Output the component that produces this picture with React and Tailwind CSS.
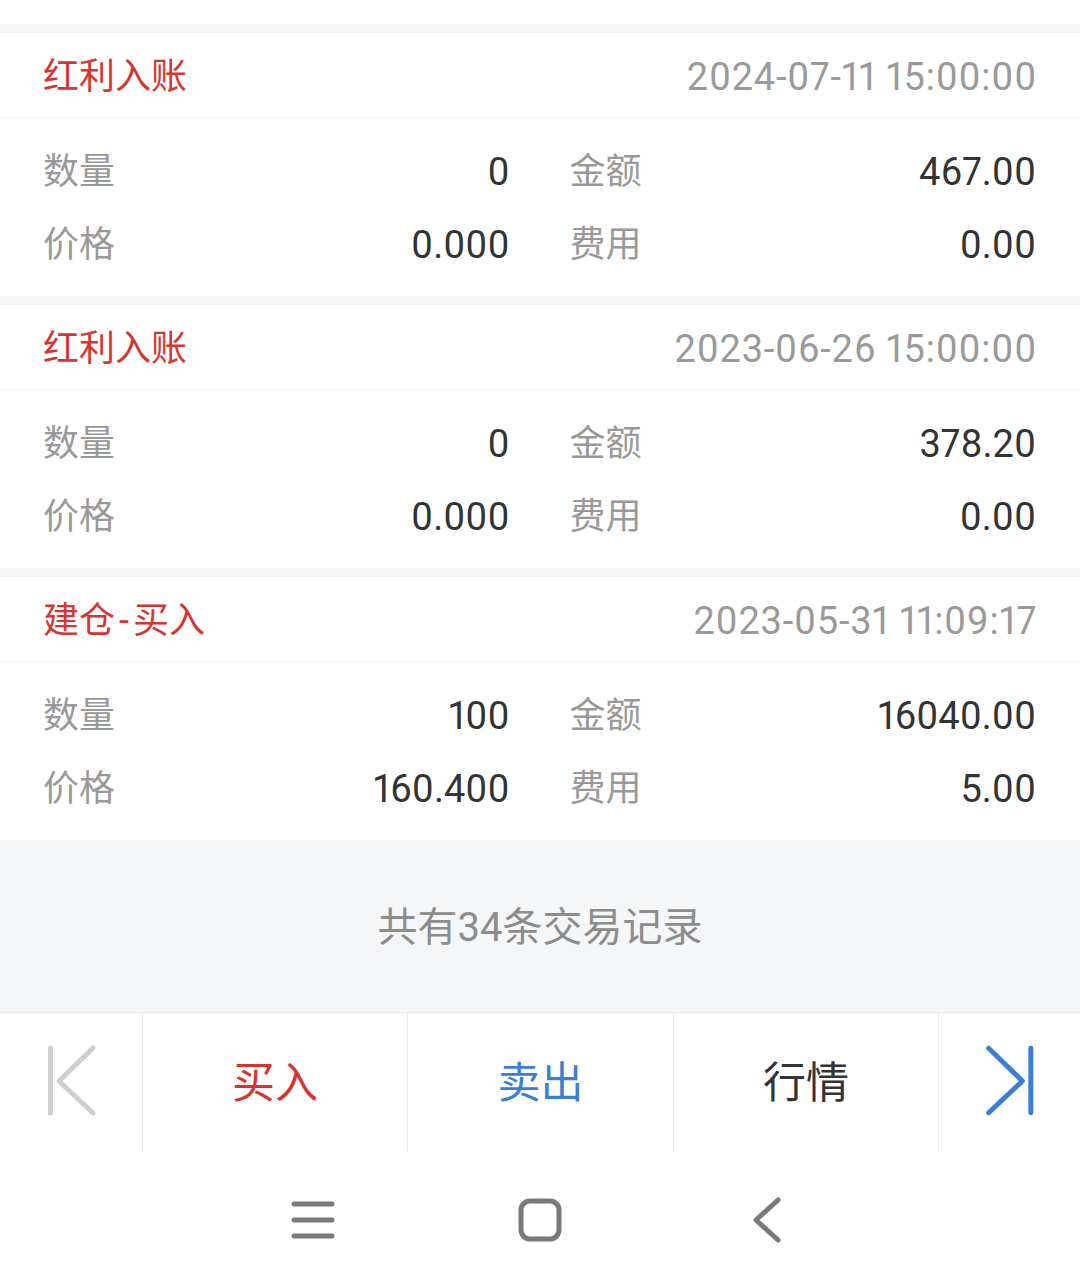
import React from 'react'

const records = [
  {
    type: ['红利入账'],
    time: '2024-07-11 15:00:00',
    qty: '0',
    amount: '467.00',
    price: '0.000',
    fee: '0.00',
  },
  {
    type: ['红利入账'],
    time: '2023-06-26 15:00:00',
    qty: '0',
    amount: '378.20',
    price: '0.000',
    fee: '0.00',
  },
  {
    type: ['建仓', '买入'],
    time: '2023-05-31 11:09:17',
    qty: '100',
    amount: '16040.00',
    price: '160.400',
    fee: '5.00',
  },
]

const Field = ({ label, value }) => (
  <div className="flex items-center justify-between h-[73px]">
    <span className="text-[36px] leading-none text-[#999999]">{label}</span>
    <span className="text-[38px] leading-none text-[#333333] proportional-nums">{value}</span>
  </div>
)

// "建仓-买入" uses a wider dash in the original app font
const Title = ({ parts }) => (
  <span className="text-[36px] leading-none text-[#d8342f]">
    {parts[0]}
    {parts.length > 1 && (
      <>
        <span className="px-[4px]">-</span>
        {parts[1]}
      </>
    )}
  </span>
)

const RecordCard = ({ record }) => (
  <div>
    <div className="h-[9px] bg-[#f5f6f8]" />
    <div className="bg-white">
      <div className="h-[85px] pt-[3px] px-[43px] flex items-center justify-between border-b border-[#f1f1f1]">
        <Title parts={record.type} />
        <span className="text-[38px] leading-none tracking-[0.75px] text-[#9a9a9a] proportional-nums">
          {record.time}
        </span>
      </div>
      <div className="pt-[17px] pb-[15px] pl-[43px] pr-[44px] grid grid-cols-2 gap-x-[60px]">
        <Field label="数量" value={record.qty} />
        <Field label="金额" value={record.amount} />
        <Field label="价格" value={record.price} />
        <Field label="费用" value={record.fee} />
      </div>
    </div>
  </div>
)

const FirstIcon = () => (
  <svg width="142" height="140" viewBox="0 0 142 140" fill="none">
    <path d="M50.5 35V100" stroke="#cfcfcf" strokeWidth="5" strokeLinecap="round" />
    <path d="M93 35L59 68L93 100" stroke="#cfcfcf" strokeWidth="5" strokeLinecap="round" strokeLinejoin="round" />
  </svg>
)

const LastIcon = () => (
  <svg width="142" height="140" viewBox="0 0 142 140" fill="none">
    <path d="M50 35L84 68L50 100" stroke="#3a7fd5" strokeWidth="5" strokeLinecap="round" strokeLinejoin="round" />
    <path d="M92.5 35V100" stroke="#3a7fd5" strokeWidth="5" strokeLinecap="round" />
  </svg>
)

export default function App() {
  return (
    <div
      className="w-[1080px] h-[1286px] flex flex-col bg-white overflow-hidden"
      style={{ fontFamily: 'Roboto, "Noto Sans CJK SC", sans-serif' }}
    >
      <div className="h-[24px] bg-white" />

      {records.map((r, i) => (
        <RecordCard key={i} record={r} />
      ))}

      <div className="flex-1 pt-[4px] bg-[#f5f6f8] flex items-center justify-center border-b border-[#e8e8e8]">
        <span className="text-[40px] leading-none text-[#8c8c8c]">共有34条交易记录</span>
      </div>

      <div className="h-[140px] flex bg-white">
        <button className="w-[142px] h-full flex items-center justify-center">
          <FirstIcon />
        </button>
        <button className="w-[265px] h-full flex items-center justify-center border-l border-[#ececec] text-[43px] leading-none text-[#d8342f]">
          买入
        </button>
        <button className="w-[266px] h-full flex items-center justify-center border-l border-[#ececec] text-[43px] leading-none text-[#3a7fd5]">
          卖出
        </button>
        <button className="w-[265px] h-full flex items-center justify-center border-l border-[#ececec] text-[43px] leading-none text-[#333333]">
          行情
        </button>
        <button className="w-[142px] h-full flex items-center justify-center border-l border-[#ececec]">
          <LastIcon />
        </button>
      </div>

      <div className="h-[133px] flex items-center justify-center gap-[147px] bg-white">
        <div className="w-[80px] flex justify-center">
          <svg width="44" height="40" viewBox="0 0 44 40" fill="none">
            <path d="M3 4H41M3 20H41M3 36H41" stroke="#7a7a7a" strokeWidth="5" strokeLinecap="round" />
          </svg>
        </div>
        <div className="w-[80px] flex justify-center">
          <svg width="44" height="44" viewBox="0 0 44 44" fill="none">
            <rect x="3" y="3" width="38" height="38" rx="9" stroke="#7a7a7a" strokeWidth="5" />
          </svg>
        </div>
        <div className="w-[80px] flex justify-center">
          <svg width="30" height="46" viewBox="0 0 30 46" fill="none">
            <path d="M26 3L4 23L26 43" stroke="#7a7a7a" strokeWidth="5" strokeLinecap="round" strokeLinejoin="round" />
          </svg>
        </div>
      </div>
    </div>
  )
}
